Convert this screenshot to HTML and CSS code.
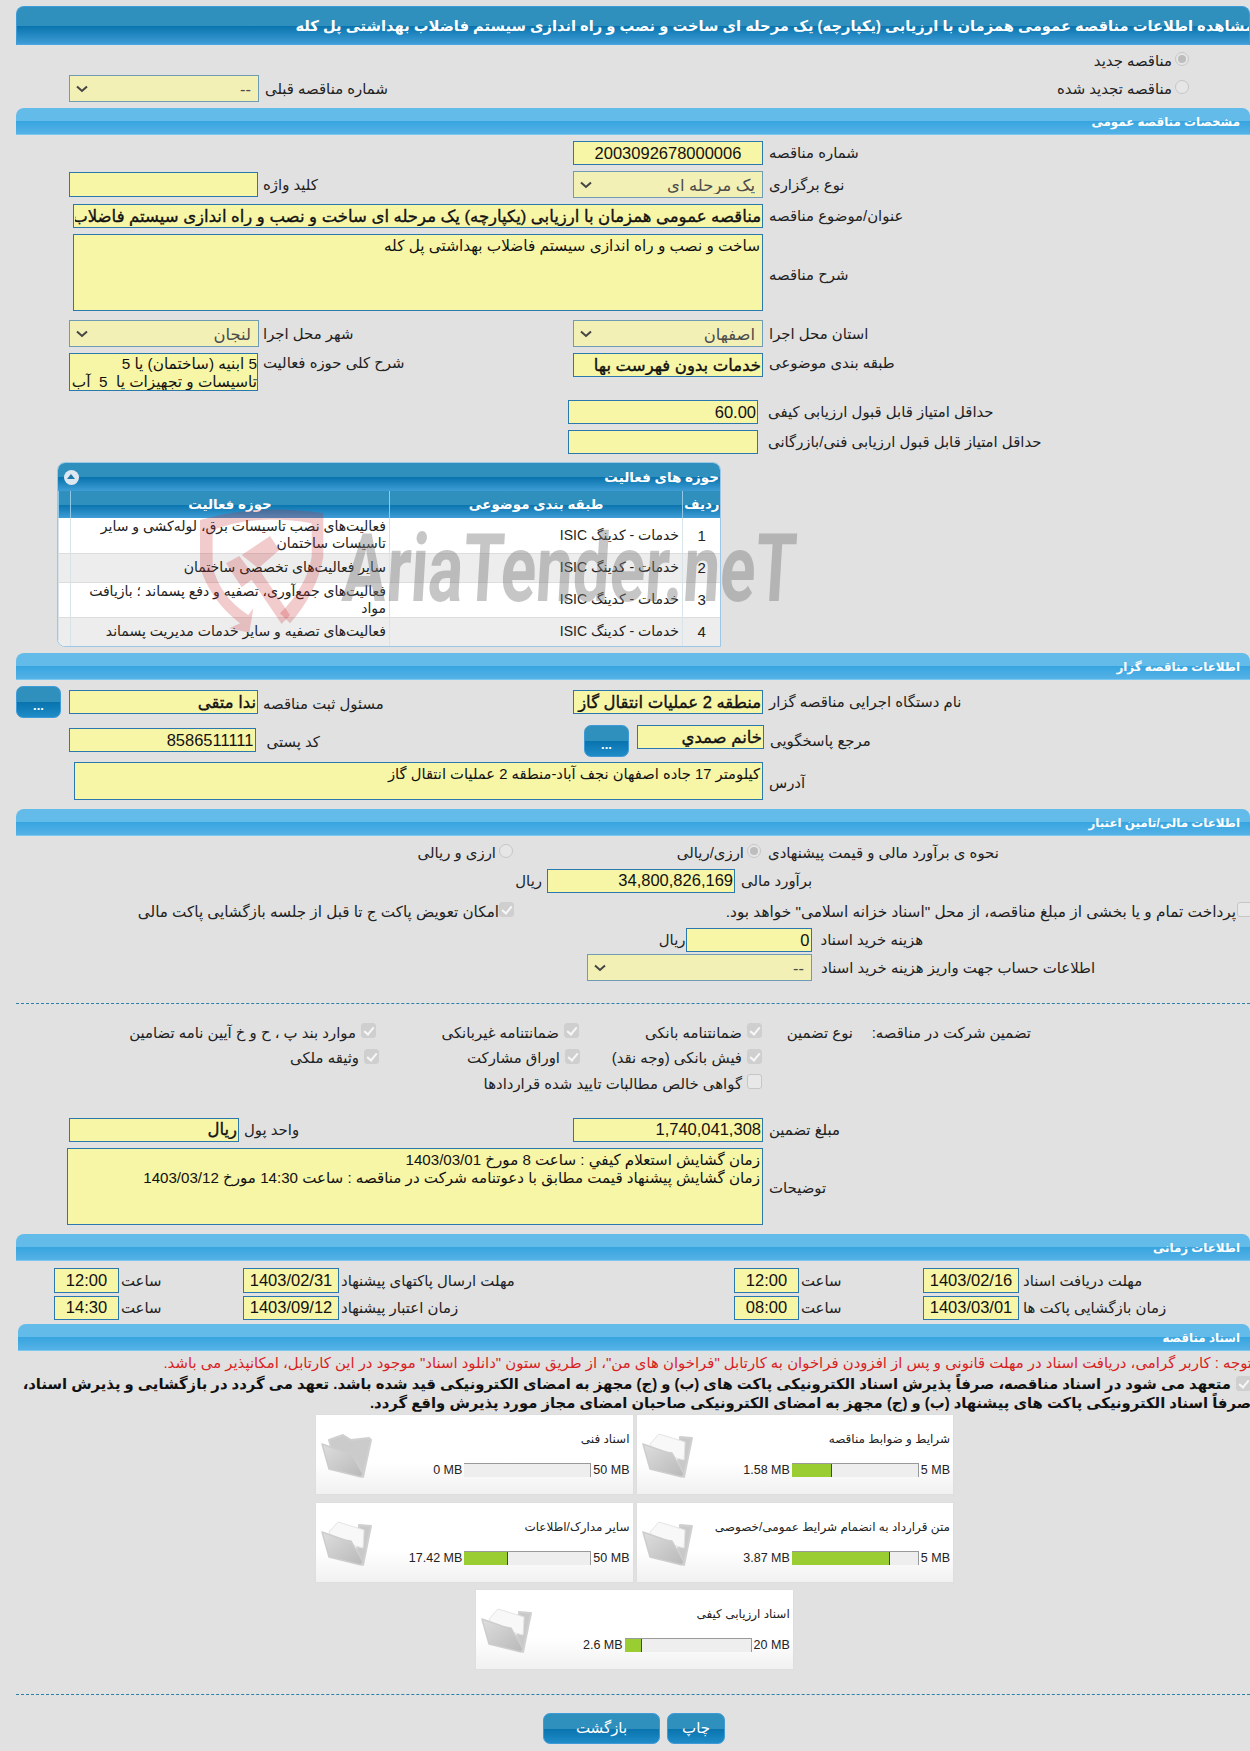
FILE: index.html
```html
<!DOCTYPE html>
<html lang="fa">
<head>
<meta charset="utf-8">
<title>مشاهده اطلاعات مناقصه</title>
<link rel="stylesheet" href="styles.css">
</head>
<body>
<svg class="defs" width="0" height="0" aria-hidden="true">
  <defs>
    <linearGradient id="fg" x1="0" y1="0" x2="1" y2="1"><stop offset="0" stop-color="#dedede"/><stop offset="1" stop-color="#b8b8b8"/></linearGradient>
    <symbol id="folder" viewBox="0 0 52 46">
      <path d="M38 5 50 6 42 45 36 30Z" fill="#c9c9c9" stroke="#d0d0d0" stroke-width="2" stroke-linejoin="round"/>
      <path d="M8 12 17 2 43 10 42 28 12 20Z" fill="#f8f8f8" stroke="#e4e4e4" stroke-linejoin="round"/>
      <path d="M1 12 18 18Q26 21 30 21L42 42 40 45 8 37Z" fill="url(#fg)" stroke="#cdcdcd" stroke-width="1.5" stroke-linejoin="round"/>
    </symbol>
    <symbol id="folder-empty" viewBox="0 0 52 46">
      <path d="M8 8 22 3 30 8 48 6 50 8 42 45 36 30 12 22Z" fill="#cbcbcb" stroke="#d0d0d0" stroke-width="2" stroke-linejoin="round"/>
      <path d="M1 12 18 18Q26 21 30 21L42 42 40 45 8 37Z" fill="url(#fg)" stroke="#cdcdcd" stroke-width="1.5" stroke-linejoin="round"/>
    </symbol>
  </defs>
</svg>

<div class="title-bar"><h1>مشاهده اطلاعات مناقصه عمومی همزمان با ارزیابی (یکپارچه) یک مرحله ای ساخت و نصب و راه اندازی سیستم فاضلاب بهداشتی پل کله</h1></div>

<div class="row r-new">
  <label class="opt opt-top"><input type="radio" class="radio on" checked disabled><span>مناقصه جدید</span></label>
</div>
<div class="row r-old">
  <div class="left"><select class="sel w190" disabled dir="rtl"><option>--</option></select><span class="lbl">شماره مناقصه قبلی</span></div>
  <label class="opt opt-renew"><input type="radio" class="radio" disabled><span>مناقصه تجدید شده</span></label>
</div>

<div class="sec s1"><h2>مشخصات مناقصه عمومی</h2></div>

<div class="row r-num">
  <div class="left"></div>
  <div class="right"><input class="inp w190 num ctr" dir="ltr" value="2003092678000006" readonly><span class="lbl">شماره مناقصه</span></div>
</div>
<div class="row r-type">
  <div class="left"><input class="inp w189 kw" dir="rtl" readonly><span class="lbl l5">کلید واژه</span></div>
  <div class="right"><select class="sel w190" disabled dir="rtl"><option>یک مرحله ای</option></select><span class="lbl">نوع برگزاری</span></div>
</div>
<div class="row r-subj">
  <input class="inp b wide690" dir="rtl" value="مناقصه عمومی همزمان با ارزیابی (یکپارچه) یک مرحله ای ساخت و نصب و راه اندازی سیستم فاضلاب بهداشتی پل کله" readonly><span class="lbl">عنوان/موضوع مناقصه</span>
</div>
<div class="row r-desc">
  <textarea class="ta wide690 h77" dir="rtl" readonly>ساخت و نصب و راه اندازی سیستم فاضلاب بهداشتی پل کله</textarea><span class="lbl low">شرح مناقصه</span>
</div>
<div class="row r-prov">
  <div class="left"><select class="sel w190" disabled dir="rtl"><option>لنجان</option></select><span class="lbl l4">شهر محل اجرا</span></div>
  <div class="right"><select class="sel w190" disabled dir="rtl"><option>اصفهان</option></select><span class="lbl">استان محل اجرا</span></div>
</div>
<div class="row r-cat">
  <div class="left"><textarea class="ta small" dir="rtl" readonly>5 ابنیه (ساختمان) یا 5
تاسیسات و تجهیزات یا  5  آب</textarea><span class="lbl l5 up">شرح کلی حوزه فعالیت</span></div>
  <div class="right"><input class="inp b w190" dir="rtl" value="خدمات بدون فهرست بها" readonly><span class="lbl up">طبقه بندی موضوعی</span></div>
</div>
<div class="row r-min1"><input class="inp w190 num" dir="rtl" value="60.00" readonly><span class="lbl l10">حداقل امتیاز قابل قبول ارزیابی کیفی</span></div>
<div class="row r-min2"><input class="inp w190" dir="rtl" readonly><span class="lbl l10">حداقل امتیاز قابل قبول ارزیابی فنی/بازرگانی</span></div>

<section class="panel">
  <div class="panel-head"><span class="collapse"></span><h3>حوزه های فعالیت</h3></div>
  <table dir="rtl">
    <colgroup><col class="c1"><col class="c2"><col class="c3"><col class="c4"></colgroup>
    <thead><tr><th>ردیف</th><th>طبقه بندی موضوعی</th><th>حوزه فعالیت</th><th></th></tr></thead>
    <tbody>
      <tr class="tall"><td class="n">1</td><td>خدمات - کدینگ ISIC</td><td>فعالیت‌های نصب تاسیسات برق، لوله‌کشی و سایر تاسیسات ساختمان</td><td></td></tr>
      <tr class="alt"><td class="n">2</td><td>خدمات - کدینگ ISIC</td><td>سایر فعالیت‌های تخصصی ساختمان</td><td></td></tr>
      <tr class="tall"><td class="n">3</td><td>خدمات - کدینگ ISIC</td><td>فعالیت‌های جمع‌آوری، تصفیه و دفع پسماند ؛ بازیافت مواد</td><td></td></tr>
      <tr class="alt"><td class="n">4</td><td>خدمات - کدینگ ISIC</td><td>فعالیت‌های تصفیه و سایر خدمات مدیریت پسماند</td><td></td></tr>
    </tbody>
  </table>
</section>

<div class="sec s2"><h2>اطلاعات مناقصه گزار</h2></div>

<div class="row r-org">
  <div class="left pl16"><button class="btn dots" type="button">...</button><input class="inp b w189 ml8 mt4" dir="rtl" value="ندا متقی" readonly><span class="lbl l5 mt9">مسئول ثبت مناقصه</span></div>
  <div class="right mt4"><input class="inp b w190" dir="rtl" value="منطقه 2 عملیات انتقال گاز" readonly><span class="lbl">نام دستگاه اجرایی مناقصه گزار</span></div>
</div>
<div class="row r-ref">
  <div class="left"><input class="inp w186 num mt3" dir="rtl" value="8586511111" readonly><span class="lbl l11 mt3">کد پستی</span></div>
  <div class="right pl11"><button class="btn dots" type="button">...</button><input class="inp b w127" dir="rtl" value="خانم صمدي" readonly><span class="lbl">مرجع پاسخگویی</span></div>
</div>
<div class="row r-addr">
  <textarea class="ta addr w689 h38" dir="rtl" readonly>کیلومتر 17 جاده اصفهان نجف آباد-منطقه 2 عملیات انتقال گاز</textarea><span class="lbl low">آدرس</span>
</div>

<div class="sec s3"><h2>اطلاعات مالی/تامین اعتبار</h2></div>

<div class="row r-how">
  <div class="left-end pr60"><label class="opt"><input type="radio" class="radio" disabled><span>ارزی و ریالی</span></label></div>
  <div class="right-how"><label class="opt"><input type="radio" class="radio on" checked disabled><span>ارزی/ریالی</span></label></div>
  <span class="lbl low">نحوه ی برآورد مالی و قیمت پیشنهادی</span>
</div>
<div class="row r-est">
  <div class="est-unit"><span class="lbl nomargin">ریال</span></div>
  <input class="inp w188 num" dir="rtl" value="34,800,826,169" readonly><span class="lbl">برآورد مالی</span>
</div>
<div class="row r-pay">
  <div class="left-514"><label class="opt"><input type="checkbox" class="check on" checked disabled><span>امکان تعویض پاکت ج تا قبل از جلسه بازگشایی پاکت مالی</span></label></div>
  <div class="pay-right"><label class="opt tight"><input type="checkbox" class="check" disabled><span>پرداخت تمام و یا بخشی از مبلغ مناقصه، از محل "اسناد خزانه اسلامی" خواهد بود.</span></label></div>
</div>
<div class="row r-cost">
  <div class="cost-unit"><span class="lbl nomargin">ریال</span></div>
  <input class="inp w126 num" dir="rtl" value="0" readonly><span class="lbl l9">هزینه خرید اسناد</span>
</div>
<div class="row r-acc">
  <select class="sel w225" disabled dir="rtl"><option>--</option></select><span class="lbl l9">اطلاعات حساب جهت واریز هزینه خرید اسناد</span>
</div>

<hr class="dash d1">

<div class="guar">
  <label class="opt g13"><input type="checkbox" class="check on" checked disabled><span>موارد بند پ ، ح و خ آیین نامه تضامین</span></label>
  <label class="opt g12"><input type="checkbox" class="check on" checked disabled><span>ضمانتنامه غیربانکی</span></label>
  <label class="opt g11"><input type="checkbox" class="check on" checked disabled><span>ضمانتنامه بانکی</span></label>
  <span class="lbl g-type">نوع تضمین</span>
  <span class="lbl g-head">تضمین شرکت در مناقصه:</span>
  <label class="opt g23"><input type="checkbox" class="check on" checked disabled><span>وثیقه ملکی</span></label>
  <label class="opt g22"><input type="checkbox" class="check on" checked disabled><span>اوراق مشارکت</span></label>
  <label class="opt g21"><input type="checkbox" class="check on" checked disabled><span>فیش بانکی (وجه نقد)</span></label>
  <label class="opt g31"><input type="checkbox" class="check" disabled><span>گواهی خالص مطالبات تایید شده قراردادها</span></label>
</div>

<div class="row r-amt">
  <div class="left"><input class="inp b w170" dir="rtl" value="ریال" readonly><span class="lbl l5">واحد پول</span></div>
  <div class="right"><input class="inp w190 num" dir="rtl" value="1,740,041,308" readonly><span class="lbl">مبلغ تضمین</span></div>
</div>
<div class="row r-note">
  <textarea class="ta note w696 h77" dir="rtl" readonly>زمان گشايش استعلام كيفي : ساعت 8 مورخ 1403/03/01
زمان گشايش پيشنهاد قيمت مطابق با دعوتنامه شركت در مناقصه : ساعت 14:30 مورخ 1403/03/12</textarea><span class="lbl low">توضیحات</span>
</div>

<div class="sec s4"><h2>اطلاعات زمانی</h2></div>

<div class="row times t1">
  <div class="tcell"><input class="inp time" dir="ltr" value="12:00" readonly><span class="lbl l2">ساعت</span></div>
  <div class="dcell"><input class="inp date" dir="ltr" value="1403/02/31" readonly><span class="lbl l2">مهلت ارسال پاکتهای پیشنهاد</span></div>
  <div class="tcell"><input class="inp time" dir="ltr" value="12:00" readonly><span class="lbl l2">ساعت</span></div>
  <div class="dcell"><input class="inp date" dir="ltr" value="1403/02/16" readonly><span class="lbl l3">مهلت دریافت اسناد</span></div>
</div>
<div class="row times t2">
  <div class="tcell"><input class="inp time" dir="ltr" value="14:30" readonly><span class="lbl l2">ساعت</span></div>
  <div class="dcell"><input class="inp date" dir="ltr" value="1403/09/12" readonly><span class="lbl l2">زمان اعتبار پیشنهاد</span></div>
  <div class="tcell"><input class="inp time" dir="ltr" value="08:00" readonly><span class="lbl l2">ساعت</span></div>
  <div class="dcell"><input class="inp date" dir="ltr" value="1403/03/01" readonly><span class="lbl l3">زمان بازگشایی پاکت ها</span></div>
</div>

<div class="sec s5"><h2>اسناد مناقصه</h2></div>

<p class="notice">توجه : کاربر گرامی، دریافت اسناد در مهلت قانونی و پس از افزودن فراخوان به کارتابل "فراخوان های من"، از طریق ستون "دانلود اسناد" موجود در این کارتابل، امکانپذیر می باشد.</p>
<div class="pledge">
  <input type="checkbox" class="check on" checked disabled>
  <p>متعهد می شود در اسناد مناقصه، صرفاً پذیرش اسناد الکترونیکی پاکت های (ب) و (ج) مجهز به امضای الکترونیکی قید شده باشد. تعهد می گردد در بازگشایی و پذیرش اسناد،<br><span class="pl2">صرفاً اسناد الکترونیکی پاکت های پیشنهاد (ب) و (ج) مجهز به امضای الکترونیکی صاحبان امضای مجاز مورد پذیرش واقع گردد.</span></p>
</div>

<div class="cards c-first">
  <article class="card"><svg class="folder"><use href="#folder-empty"/></svg><div class="card-body"><h4>اسناد فنی</h4><div class="meter"><span class="mb">50 MB</span><span class="bar"></span><span class="mb">0 MB</span></div></div></article>
  <article class="card"><svg class="folder"><use href="#folder"/></svg><div class="card-body"><h4>شرایط و ضوابط مناقصه</h4><div class="meter"><span class="mb">5 MB</span><span class="bar"><i style="width:32%"></i></span><span class="mb">1.58 MB</span></div></div></article>
</div>
<div class="cards c-second">
  <article class="card"><svg class="folder"><use href="#folder"/></svg><div class="card-body"><h4>سایر مدارک/اطلاعات</h4><div class="meter"><span class="mb">50 MB</span><span class="bar"><i style="width:35%"></i></span><span class="mb">17.42 MB</span></div></div></article>
  <article class="card"><svg class="folder"><use href="#folder"/></svg><div class="card-body"><h4>متن قرارداد به انضمام شرایط عمومی/خصوصی</h4><div class="meter"><span class="mb">5 MB</span><span class="bar"><i style="width:78%"></i></span><span class="mb">3.87 MB</span></div></div></article>
</div>
<div class="cards c-third">
  <article class="card"><svg class="folder"><use href="#folder"/></svg><div class="card-body"><h4>اسناد ارزیابی کیفی</h4><div class="meter"><span class="mb">20 MB</span><span class="bar"><i style="width:14%"></i></span><span class="mb">2.6 MB</span></div></div></article>
</div>

<hr class="dash d2">

<div class="actions">
  <button class="btn back" type="button">بازگشت</button>
  <button class="btn print" type="button">چاپ</button>
</div>

<div class="watermark" aria-hidden="true">
  <svg class="shield" viewBox="0 0 450 450">
    <path d="M30 60Q200 10 400 40L400 170Q380 280 300 370L270 340Q350 260 365 170L365 70Q200 40 68 90L68 200Q90 290 175 345L190 325 178 398 118 385 150 370Q60 300 30 200Z" fill="#c9272c" opacity=".24"/>
    <path d="M108 190 148 168 195 232 155 262ZM155 165 240 108 268 150 205 205ZM205 205 300 345 275 372 175 225Z" fill="#c9272c" opacity=".24"/>
  </svg>
  <span class="wm-text">AriaTender.neT</span>
</div>
</body>
</html>
```
FILE: styles.css
```css
* { box-sizing: border-box; }
html, body { margin: 0; padding: 0; width: 1250px; height: 1751px; overflow: hidden; }
body { position: relative; background: #e1e1e1; color: #1c1c1c; font: 14.9px "Liberation Sans", "DejaVu Sans", sans-serif; }
.defs { position: absolute; }
h1, h2, h3, h4, p { margin: 0; font-weight: normal; }

/* bars */
.title-bar { margin: 6px 0 0 16px; height: 39px; direction: rtl; display: flex; align-items: center; overflow: hidden;
  border: 1px solid #3f9bd8; border-bottom-color: #4aa5e0; border-radius: 8px 8px 0 0;
  background: linear-gradient(#2f90bd 0, #2f90bd 50%, #0873ad 51%, #3f9dd6 100%); }
.title-bar h1 { margin-right: -5px; color: #fff; font-size: 14.7px; font-weight: bold; white-space: nowrap; }
.sec { margin-left: 16px; height: 27px; direction: rtl; display: flex; align-items: center; padding-right: 10px;
  border-radius: 8px 8px 0 0; border-bottom: 1px solid #7cc7ef;
  background: linear-gradient(#62bbe9 0, #62bbe9 48%, #38a5e0 52%, #55b2e6 100%); }
.sec h2 { color: #fff; font-size: 11.85px; font-weight: bold; padding-top: 2px; }
.s1 { margin-top: 6px; }
.s2 { margin-top: 6px; }
.s3 { margin-top: 9px; }
.s4 { margin-top: 9px; }
.s5 { margin-top: 4px; margin-left: 18px; }

/* rows */
.row { display: flex; align-items: center; }
.left { width: 573px; padding-left: 69px; display: flex; align-items: center; flex: none; }
.right { display: flex; align-items: center; }
.lbl { margin-left: 6px; font-size: 14.9px; white-space: nowrap; direction: rtl; color: #222; }
.l2 { margin-left: 2px; } .l3 { margin-left: 4px; } .l4 { margin-left: 4px; } .l5 { margin-left: 5px; }
.l9 { margin-left: 9px; } .l10 { margin-left: 10px; } .l11 { margin-left: 11px; }
.nomargin { margin: 0; }
.up { align-self: flex-start; margin-top: 1px; }
.low { padding-top: 4px; }

.inp, .ta, .sel { font-family: "Liberation Sans", "DejaVu Sans", sans-serif; color: #111; background-color: #f7f5a6; border: 1px solid #2a78ad; outline: 0; border-radius: 0; flex: none; }
.inp { height: 24px; padding: 0 1px; font-size: 14.9px; }
.num { font-size: 16.5px; }
.ctr { text-align: center; }
.b { font-weight: normal; font-size: 16.5px; -webkit-text-stroke: .35px #111; }
.ta { display: block; resize: none; overflow: hidden; padding: 2px; font-size: 15.3px; line-height: 18px; }
.addr { font-size: 14.75px; }
.note { font-size: 15.1px; }
.sel { height: 27px; appearance: none; -webkit-appearance: none; padding: 0 7px 0 24px; font-size: 16.4px; color: #4c4c4c; border-color: #6f9cb5; opacity: 1;
  background: #f3f0b6 url("data:image/svg+xml,%3Csvg xmlns='http://www.w3.org/2000/svg' width='12' height='8'%3E%3Cpath d='M1 1.5 6 6 11 1.5' fill='none' stroke='%23444' stroke-width='2'/%3E%3C/svg%3E") no-repeat 6px 50%; }

.w126 { width: 126px; } .w127 { width: 127px; } .w170 { width: 170px; } .w186 { width: 186.5px; } .w188 { width: 188px; }
.w189 { width: 189px; } .w190 { width: 190px; } .w225 { width: 225px; }
.wide690 { width: 690px; margin-left: 73px; } .w689 { width: 689px; margin-left: 74px; } .w696 { width: 696px; margin-left: 67px; }
.h77 { height: 77px; } .h38 { height: 38px; }
.small { width: 189px; height: 38px; white-space: pre; padding: 1px 0; flex: none; }
.kw { height: 25px; }
.ml8 { margin-left: 8px; } .mt3 { margin-top: 3px; } .mt4 { margin-top: 4px; } .mt9 { margin-top: 9px; } .pl16 { padding-left: 16px; } .pl11 { padding-left: 11px; }
.mt4.right { align-self: flex-start; }

.r-new { margin-top: 6px; height: 15px; justify-content: flex-end; padding-right: 61px; }
.r-old { margin-top: 9px; height: 27px; }
.opt { display: flex; align-items: center; direction: rtl; gap: 3px; font-size: 14.9px; white-space: nowrap; color: #222; }
.opt > span { padding-top: 4px; }
.opt-renew { margin-left: auto; margin-right: 61px; margin-top: -3px; }

.r-num { margin-top: 6px; height: 24px; }
.r-type { margin-top: 6px; height: 27px; }
.r-subj { margin-top: 6px; height: 24px; }
.r-desc { margin-top: 6px; height: 77px; }
.r-prov { margin-top: 9px; height: 27px; }
.r-cat { margin-top: 6px; height: 38px; align-items: flex-start; }
.r-cat .left, .r-cat .right { align-items: flex-start; }
.r-min1 { margin-top: 9px; height: 24px; padding-left: 568px; }
.r-min2 { margin-top: 6px; height: 24px; padding-left: 568px; }

/* table panel */
.panel { margin: 8px 0 0 57px; width: 664px; height: 185px; overflow: hidden; background: #fff; border: 1px solid #9cc8e6; border-radius: 8px 8px 0 8px; }
.panel-head { height: 28px; display: flex; align-items: center; justify-content: space-between; padding: 0 1px 0 6px;
  background: linear-gradient(#2f90bd 0, #2f90bd 50%, #0873ad 51%, #3f9dd6 100%); }
.panel-head h3 { color: #fff; font-size: 13.5px; font-weight: bold; direction: rtl; }
.collapse { width: 15px; height: 15px; border-radius: 50%; background: #dfe8f0; position: relative; }
.collapse::after { content: ""; position: absolute; left: 3px; top: 4px; border: 4.5px solid transparent; border-top: 0; border-bottom: 5px solid #1e78ab; }
table { width: 662px; border-collapse: collapse; table-layout: fixed; font-size: 14px; }
.c1 { width: 38px; } .c2 { width: 293px; } .c3 { width: 319px; } .c4 { width: 12px; }
th { height: 27px; padding: 0; color: #fff; font-weight: bold; font-size: 13.4px; border-left: 1px solid #8fc9ea;
  background: linear-gradient(#2f90bd 0, #2f90bd 50%, #0873ad 51%, #3f9dd6 100%); }
td { padding: 0 3px; border-left: 1px solid #d8e4ec; border-bottom: 1px solid #ddd; line-height: 17px; color: #222; text-align: right; }
td.n { text-align: center; font-size: 15px; }
tr.tall td { height: 35px; } tr.alt td { height: 29px; background: #ededed; }

/* finance */
.r-org { margin-top: 6px; height: 32px; align-items: flex-start; }
.r-org .left { align-items: flex-start; }
.btn { font-family: "Liberation Sans", "DejaVu Sans", sans-serif; color: #fff; border: 1px solid #3f9bd8; border-radius: 7px; padding: 0; cursor: pointer;
  background: linear-gradient(#2f90bd 0, #2f90bd 50%, #0873ad 51%, #1f8cc8 100%); }
.dots { width: 45px; height: 32px; font-weight: bold; font-size: 13px; padding-top: 6px; flex: none; }
.r-ref { margin-top: 7px; height: 32px; align-items: flex-start; }
.r-ref .left { align-items: flex-start; }
.r-ref .dots { margin-right: 8px; }
.r-ref .right { align-items: flex-start; }
.r-ref .lbl { padding-top: 5px; }
.r-ref .right .lbl { padding-top: 7px; }
.r-addr { margin-top: 5px; height: 38px; }
.r-how { margin-top: 7px; height: 15px; }
.left-end { width: 573px; display: flex; justify-content: flex-end; flex: none; }
.pr60 { padding-right: 60px; }
.right-how { width: 195px; display: flex; justify-content: flex-end; padding-right: 7px; flex: none; }
.r-how .lbl { margin-left: 0; }
.r-est { margin-top: 10px; height: 25px; }
.est-unit { width: 547px; display: flex; justify-content: flex-end; padding-right: 5px; flex: none; }
.r-pay { margin-top: 9px; height: 15px; }
.left-514 { width: 514px; display: flex; justify-content: flex-end; flex: none; }
.left-514 .opt { gap: 0; font-size: 15.2px; }
.pay-right { flex: 1; display: flex; justify-content: flex-end; margin-right: -2px; }
.tight { gap: 1px; font-size: 15.35px; }
.r-cost { margin-top: 11px; height: 24px; }
.cost-unit { width: 685.5px; display: flex; justify-content: flex-end; flex: none; }
.r-acc { margin-top: 2px; height: 27px; padding-left: 587px; }

.radio, .check { appearance: none; -webkit-appearance: none; margin: 0; flex: none; width: 14px; height: 14px; background: #e6e6e6; border: 1px solid #c6c6c6; position: relative; }
.radio { border-radius: 50%; }
.radio.on::after { content: ""; position: absolute; left: 2px; top: 2px; width: 8px; height: 8px; border-radius: 50%; background: #bdbdbd; }
.check { width: 15px; height: 15px; border-radius: 3px; background: #e8e8e8; }
.check.on { background: #cfcfcf; border-color: #cfcfcf; }
.check.on::after { content: ""; position: absolute; left: 4px; top: 1px; width: 4px; height: 8px; border: solid #f7f7f7; border-width: 0 2px 2px 0; transform: rotate(40deg); }

.dash { border: 0; border-top: 1px dashed #2e80a8; margin: 0 0 0 16px; height: 0; }
.d1 { margin-top: 22px; }
.d2 { margin-top: 25px; }

.guar { margin-top: 14px; height: 76.5px; display: grid; grid-template-columns: 376px 203px 183px 91px 178px; grid-template-rows: 25.5px 25.5px 25.5px; direction: ltr; }
.guar .opt { justify-self: end; align-self: center; gap: 5px; }
.guar .lbl { margin: 0; align-self: center; padding-top: 4px; }
.g13, .g23 { grid-column: 1; } .g12, .g22 { grid-column: 2; } .g11, .g21, .g31 { grid-column: 3; }
.g13, .g12, .g11, .g-type, .g-head { grid-row: 1; } .g23, .g22, .g21 { grid-row: 2; } .g31 { grid-row: 3; }
.g23 { margin-right: -3px; } .g22 { margin-right: -1px; }
.g-type { grid-column: 4; justify-self: end; }
.g-head { grid-column: 5; justify-self: end; }

.r-amt { margin-top: 23px; height: 24px; }
.r-note { margin-top: 6px; height: 77px; }

.times { padding-left: 54px; height: 24px; }
.t1 { margin-top: 8px; } .t2 { margin-top: 3px; }
.tcell { width: 189px; display: flex; align-items: center; flex: none; }
.dcell { width: 491px; display: flex; align-items: center; flex: none; }
.time { width: 65px; height: 25px; font-size: 16.5px; text-align: center; }
.date { width: 96px; height: 25px; font-size: 16.5px; text-align: center; padding: 0; }
.t2 .time, .t2 .date { height: 24px; }

.notice { margin-top: 4px; height: 17px; direction: rtl; color: #d81f1f; font-size: 14.9px; line-height: 17px; white-space: nowrap; margin-right: -2px; }
.pledge { direction: rtl; display: flex; margin-top: 3px; height: 38px; margin-right: 0; }
.pledge .check { margin-top: 1px; margin-right: -1px; }
.pledge p { font-weight: bold; font-size: 14.8px; line-height: 19px; color: #111; white-space: nowrap; margin-right: 5px; }
.pl2 { margin-right: -20px; }

/* cards */
.cards { display: flex; justify-content: center; gap: 4px; padding-left: 19px; }
.c-first { margin-top: 2px; }
.c-second { margin-top: 9px; }
.c-third { margin-top: 8px; }
.card { width: 316.5px; height: 79px; display: flex; align-items: flex-start; background: linear-gradient(#fff 0, #fff 60%, #f1f1f1 100%); box-shadow: 0 0 2px #d8d8d8; }
.folder { width: 52px; height: 46px; margin: 17px 0 0 5px; flex: none; }
.card-body { flex: 1; padding: 14px 3px 0 0; direction: rtl; min-width: 0; }
.card h4 { font-size: 12px; line-height: 20px; height: 34px; white-space: nowrap; color: #222; }
.meter { display: flex; align-items: center; gap: 2px; height: 14px; }
.mb { font-size: 12.5px; direction: ltr; white-space: nowrap; color: #222; }
.bar { width: 127px; height: 14px; background: #eee; border-top: 1px solid #999; border-left: 0; border-right: 1px solid #999; direction: ltr; display: block; flex: none; }
.bar i { display: block; height: 100%; background: #9acd32; border-right: 1px solid #444; }

.actions { margin-top: 18px; display: flex; gap: 7px; padding-left: 543px; }
.back, .print { height: 31px; font-size: 15px; }
.back { width: 117px; } .print { width: 58px; }

/* watermark laid over the table */
.watermark { position: absolute; left: 190px; top: 500px; width: 630px; height: 150px; pointer-events: none; }
.shield { position: absolute; left: 0; top: 0; width: 150px; height: 150px; }
.wm-text { position: absolute; left: 150px; top: 19px; font: bold 95px/100px "Roboto", sans-serif; color: rgba(120,120,120,.42); white-space: nowrap; transform-origin: left bottom; transform: scaleX(.69) skewX(-5deg); }
```
